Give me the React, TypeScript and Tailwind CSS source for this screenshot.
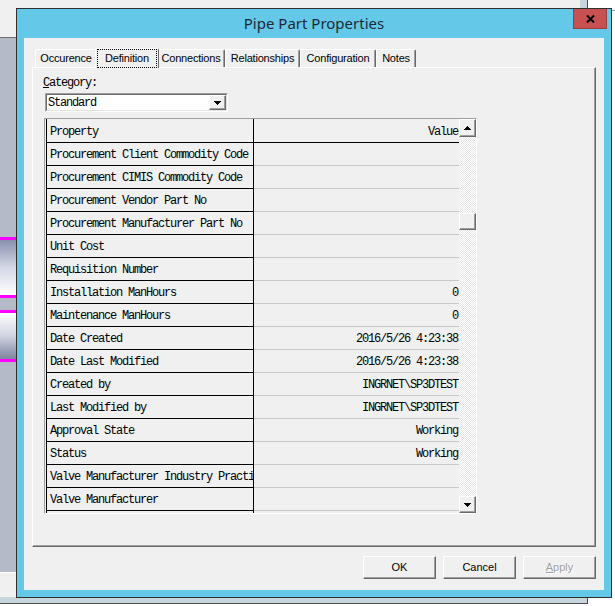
import type { ReactNode } from "react";

type Row = { name: string; value: string };

const properties: Row[] = [
  { name: "Procurement Client Commodity Code", value: "" },
  { name: "Procurement CIMIS Commodity Code", value: "" },
  { name: "Procurement Vendor Part No", value: "" },
  { name: "Procurement Manufacturer Part No", value: "" },
  { name: "Unit Cost", value: "" },
  { name: "Requisition Number", value: "" },
  { name: "Installation ManHours", value: "0" },
  { name: "Maintenance ManHours", value: "0" },
  { name: "Date Created", value: "2016/5/26 4:23:38" },
  { name: "Date Last Modified", value: "2016/5/26 4:23:38" },
  { name: "Created by", value: "INGRNET\\SP3DTEST" },
  { name: "Last Modified by", value: "INGRNET\\SP3DTEST" },
  { name: "Approval State", value: "Working" },
  { name: "Status", value: "Working" },
  { name: "Valve Manufacturer Industry Practi", value: "" },
  { name: "Valve Manufacturer", value: "" },
  { name: "", value: "" },
];

const tabs = [
  { label: "Occurence", width: "w-[62px]" },
  { label: "Definition", width: "w-[64px]", active: true },
  { label: "Connections", width: "w-[68px]" },
  { label: "Relationships", width: "w-[75px]" },
  { label: "Configuration", width: "w-[76px]" },
  { label: "Notes", width: "w-[40px]" },
];

// classic 3D edges
const raised =
  "border border-t-white border-l-white border-r-[#696969] border-b-[#696969] shadow-[inset_-1px_-1px_0_#a0a0a0]";
const mono = "font-['Liberation_Mono',monospace] text-[12px] tracking-[-1.2px] text-black";
const checker =
  "bg-[repeating-conic-gradient(#ffffff_0%_25%,#e6e6e6_0%_50%)] bg-[length:2px_2px]";

function Arrow({ up }: { up?: boolean }) {
  return (
    <svg width="7" height="4" viewBox="0 0 7 4" shapeRendering="crispEdges">
      <path d={up ? "M3.5 0L7 4H0z" : "M0 0h7L3.5 4z"} fill="#000" />
    </svg>
  );
}

function Tab({ label, width, active }: { label: string; width: string; active?: boolean }) {
  if (active) {
    return (
      <div
        className={`relative z-10 -mx-[2px] -mb-px flex h-[20px] flex-col rounded-t-[2px] border-l border-r border-t border-l-white border-r-[#696969] border-t-white bg-[#f0f0f0] px-px pb-[1px] pt-0 ${width}`}
      >
        <div className="flex flex-1 items-center justify-center border border-dotted border-black">
          {label}
        </div>
      </div>
    );
  }
  return (
    <div
      className={`flex h-[18px] items-center justify-center rounded-t-[2px] border-l border-r border-t border-l-white border-r-[#696969] border-t-white shadow-[inset_-1px_0_0_#a0a0a0] ${width}`}
    >
      {label}
    </div>
  );
}

function Button({ children, disabled }: { children: ReactNode; disabled?: boolean }) {
  return (
    <div
      className={`flex h-[23px] w-[73px] items-center justify-center bg-[#f0f0f0] ${raised} ${
        disabled ? "text-[#a0a0a0] [text-shadow:1px_1px_0_#fff]" : "text-black"
      }`}
    >
      {children}
    </div>
  );
}

function PropertyGrid() {
  return (
    <div className="ml-[11px] mt-[6px] flex h-[396px] w-[433px] border border-b-white border-l-[#a0a0a0] border-r-white border-t-[#a0a0a0] bg-[#f0f0f0] pl-px">
      <div className={`flex-1 overflow-hidden ${mono}`}>
        <div className="flex h-[24px]">
          <div className="flex w-[208px] items-center border-x border-b border-black pl-[3px] pt-[2px]">Property</div>
          <div className="flex w-[205px] items-center justify-end border-b border-black pr-px pt-[2px]">Value</div>
        </div>
        {properties.map((row, i) => (
          <div key={i} className="flex h-[23px]">
            <div className="flex w-[208px] items-center overflow-hidden whitespace-nowrap border-x border-b border-black pl-[3px] pt-[2px]">
              {row.name}
            </div>
            <div className="flex w-[205px] items-center justify-end whitespace-nowrap border-b border-[#c8c8c8] pr-px pt-[2px]">
              {row.value}
            </div>
          </div>
        ))}
      </div>
      <div className="flex w-[17px] flex-col">
        <div className={`flex h-[18px] items-center justify-center bg-[#f0f0f0] ${raised}`}>
          <Arrow up />
        </div>
        <div className={`h-[76px] ${checker}`} />
        <div className={`h-[17px] bg-[#f0f0f0] ${raised}`} />
        <div className={`flex-1 ${checker}`} />
        <div className={`flex h-[17px] items-center justify-center bg-[#f0f0f0] ${raised}`}>
          <Arrow />
        </div>
      </div>
    </div>
  );
}

export default function App() {
  return (
    <div className="relative h-[606px] w-[615px] overflow-hidden bg-white font-['Liberation_Sans',Arial,sans-serif] text-[11px] text-black">
      {/* window behind the dialog */}
      <div className="absolute left-0 top-0 h-[604px] w-[588px] border-b border-r border-[#4d4d4d] bg-[#c6d6dc]">
        <div className="flex h-[597px] w-[580px] flex-col bg-[#f0f0f0]">
          <div className="h-[37px]" />
          <div className="flex h-[535px] w-[16px] flex-col border-t border-[#6b6b6b] bg-[#b5bac9]">
            <div className="h-[199px]" />
            <div className="h-[3px] bg-[#ff00ff]" />
            <div className="h-[55px] bg-gradient-to-b from-[#8a91ad] via-[#d4d8e6] to-white" />
            <div className="h-[3px] bg-[#ff00ff]" />
            <div className="h-[12px]" />
            <div className="h-[3px] bg-[#ff00ff]" />
            <div className="h-[46px] bg-gradient-to-b from-white via-[#d0d4e2] to-[#7d849f]" />
            <div className="h-[3px] bg-[#ff00ff]" />
          </div>
          <div className="h-px w-[16px] bg-white" />
        </div>
      </div>
      <div className="absolute left-[612px] top-[10px] h-px w-[3px] bg-[#a0a0a0]" />

      {/* Pipe Part Properties dialog */}
      <div className="absolute left-[16px] top-[8px] flex h-[590px] w-[596px] flex-col border border-[#2f2f2f] bg-[#64c8e9]">
        <div className="relative flex h-[29px] items-center justify-center">
          <span className="font-['Noto_Sans',sans-serif] text-[15px] leading-none text-[#1c2a36]">
            Pipe Part Properties
          </span>
          <div className="absolute right-[4px] top-0 flex h-[20px] w-[34px] items-center justify-center border border-t-0 border-[#9e3d3d] bg-[#c75050]">
            <svg width="9" height="8" viewBox="0 0 9 8">
              <path d="M1 0.5l7 7M8 0.5l-7 7" stroke="#000" strokeWidth="2" />
            </svg>
          </div>
        </div>

        <div className="mx-[7px] mb-[7px] flex flex-1 flex-col bg-[#f0f0f0] pt-[10px]">
          <div className="flex h-[19px] items-end pl-[11px] tracking-[-0.2px]">
            {tabs.map((t) => (
              <Tab key={t.label} label={t.label} width={t.width} active={t.active} />
            ))}
          </div>

          <div className="ml-[8px] flex h-[480px] w-[564px] flex-col border border-b-[#696969] border-l-white border-r-[#696969] border-t-white shadow-[inset_-1px_-1px_0_#a0a0a0]">
            <div className={`ml-[10px] mt-[8px] h-[14px] leading-[14px] ${mono}`}>
              <span className="underline">C</span>ategory:
            </div>
            <div className="ml-[12px] mt-[3px] flex h-[19px] w-[183px] border border-b-white border-l-[#a0a0a0] border-r-white border-t-[#a0a0a0]">
              <div className="flex flex-1 border border-b-[#e3e3e3] border-l-[#696969] border-r-[#e3e3e3] border-t-[#696969] bg-white">
                <span className={`flex-1 pl-px pt-px leading-[15px] ${mono}`}>Standard</span>
                <div className={`flex w-[17px] items-center justify-center bg-[#f0f0f0] ${raised}`}>
                  <Arrow />
                </div>
              </div>
            </div>
            <PropertyGrid />
          </div>

          <div className="mt-[9px] flex justify-end gap-[7px] pr-[8px]">
            <Button>OK</Button>
            <Button>Cancel</Button>
            <Button disabled>
              <span className="underline">A</span>pply
            </Button>
          </div>
        </div>
      </div>
    </div>
  );
}
